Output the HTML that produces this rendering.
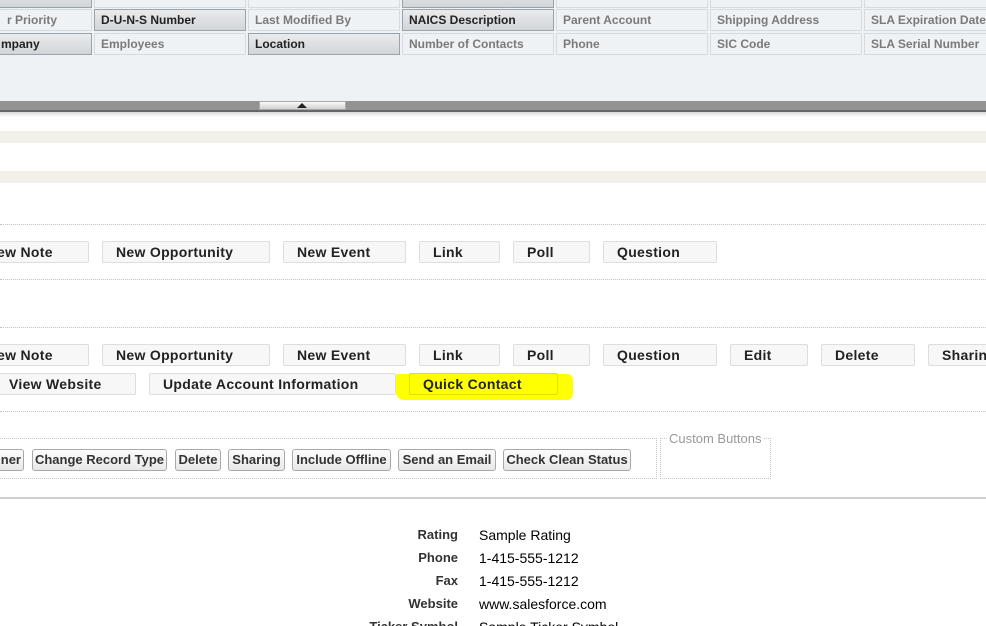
<!DOCTYPE html>
<html><head><meta charset="utf-8"><style>
*{margin:0;padding:0;box-sizing:border-box}
html,body{width:986px;height:626px;overflow:hidden}
body{background:#fff;font-family:"Liberation Sans",Arial,sans-serif;position:relative}
.a{position:absolute}
.panel{left:0;top:0;width:986px;height:101px;background:#eff2f5}
.c{position:absolute;height:22px;width:152px;border:1px solid #d5dbe0;background:#eff2f5;color:#7a7a7a;font-weight:bold;font-size:12px;line-height:20px;padding-left:6px;white-space:nowrap;overflow:hidden}
.c.d{border-color:#9aa2aa;background:linear-gradient(#e9ebed,#d2d5d8);color:#222}
.bar{left:0;top:101px;width:986px;height:11px;background:#939393;border-bottom:2px solid #666}
.sh{left:0;top:112px;width:986px;height:5px;background:linear-gradient(#d8d8d8,#fff)}
.handle{left:259px;top:101px;width:87px;height:9px;background:linear-gradient(#fafafa,#d0d0d0);border:1px solid #aaa}
.beige{left:0;width:986px;height:12px;background:#f1f1e9}
.dot{left:0;width:986px;border-top:1px dotted #c4c4c4;height:0}
.b{position:absolute;height:22px;border:1px solid #dedede;background:#f7f7f7;border-radius:2px;font-weight:bold;font-size:14px;color:#222;line-height:20px;padding-left:13px;letter-spacing:.3px;white-space:nowrap;overflow:hidden}
.k{position:absolute;top:449px;height:22px;border:1px solid #a9a9a9;border-radius:3px;background:linear-gradient(#fdfdfd,#e8e8e8);font-weight:bold;font-size:13px;color:#333;line-height:20px;text-align:center;white-space:nowrap;overflow:hidden}
.l{position:absolute;right:528px;font-weight:bold;font-size:13px;color:#333;text-align:right;white-space:nowrap}
.v{position:absolute;left:479px;font-size:14px;color:#000;white-space:nowrap}
</style></head><body>
<div class="a panel"></div>
<div class="c d" style="left:-60px;top:-14px"></div>
<div class="c" style="left:94px;top:-14px"></div>
<div class="c" style="left:248px;top:-14px"></div>
<div class="c d" style="left:402px;top:-14px"></div>
<div class="c" style="left:556px;top:-14px"></div>
<div class="c" style="left:710px;top:-14px"></div>
<div class="c" style="left:864px;top:-14px"></div>

<div class="c" style="left:-60px;top:9px;padding-left:66px">r Priority</div>
<div class="c d" style="left:94px;top:9px">D-U-N-S Number</div>
<div class="c" style="left:248px;top:9px">Last Modified By</div>
<div class="c d" style="left:402px;top:9px">NAICS Description</div>
<div class="c" style="left:556px;top:9px">Parent Account</div>
<div class="c" style="left:710px;top:9px">Shipping Address</div>
<div class="c" style="left:864px;top:9px">SLA Expiration Date</div>

<div class="c d" style="left:-60px;top:33px;padding-left:60px">mpany</div>
<div class="c" style="left:94px;top:33px">Employees</div>
<div class="c d" style="left:248px;top:33px">Location</div>
<div class="c" style="left:402px;top:33px">Number of Contacts</div>
<div class="c" style="left:556px;top:33px">Phone</div>
<div class="c" style="left:710px;top:33px">SIC Code</div>
<div class="c" style="left:864px;top:33px">SLA Serial Number</div>

<div class="a bar"></div>
<div class="a sh"></div>
<div class="a handle"><div style="position:absolute;left:37px;top:1px;width:0;height:0;border-left:5px solid transparent;border-right:5px solid transparent;border-bottom:5px solid #222"></div></div>

<div class="a beige" style="top:131px"></div>
<div class="a beige" style="top:171px"></div>

<div class="a dot" style="top:224px"></div>
<div class="a dot" style="top:279px"></div>
<div class="a dot" style="top:327px"></div>
<div class="a dot" style="top:411px"></div>

<div class="b" style="left:-40px;top:241px;width:129px;padding-left:36px">ew Note</div>
<div class="b" style="left:102px;top:241px;width:168px">New Opportunity</div>
<div class="b" style="left:283px;top:241px;width:123px">New Event</div>
<div class="b" style="left:419px;top:241px;width:81px">Link</div>
<div class="b" style="left:513px;top:241px;width:77px">Poll</div>
<div class="b" style="left:603px;top:241px;width:114px">Question</div>

<div class="b" style="left:-40px;top:344px;width:129px;padding-left:36px">ew Note</div>
<div class="b" style="left:102px;top:344px;width:168px">New Opportunity</div>
<div class="b" style="left:283px;top:344px;width:123px">New Event</div>
<div class="b" style="left:419px;top:344px;width:81px">Link</div>
<div class="b" style="left:513px;top:344px;width:77px">Poll</div>
<div class="b" style="left:603px;top:344px;width:114px">Question</div>
<div class="b" style="left:730px;top:344px;width:78px">Edit</div>
<div class="b" style="left:821px;top:344px;width:94px">Delete</div>
<div class="b" style="left:928px;top:344px;width:80px">Sharing</div>

<div class="a" style="left:396px;top:374px;width:177px;height:26px;background:#ffff00;border-radius:2px 6px 6px 8px"></div>
<div class="b" style="left:-10px;top:373px;width:146px;padding-left:18px">View Website</div>
<div class="b" style="left:149px;top:373px;width:247px">Update Account Information</div>
<div class="b" style="left:409px;top:373px;width:149px;background:#ffff00;border-color:#e0e000">Quick Contact</div>

<div class="a" style="left:-2px;top:438px;width:659px;height:41px;border:1px dotted #c4c4c4"></div>
<div class="a" style="left:660px;top:438px;width:111px;height:41px;border:1px dotted #c4c4c4"></div>
<div class="a" style="left:667px;top:431px;background:#fff;padding:0 2px;font-size:13px;color:#999">Custom Buttons</div>

<div class="k" style="left:-20px;width:44px;text-align:right;padding-right:2px">ner</div>
<div class="k" style="left:32px;width:135px">Change Record Type</div>
<div class="k" style="left:175px;width:46px">Delete</div>
<div class="k" style="left:228px;width:57px">Sharing</div>
<div class="k" style="left:292px;width:99px">Include Offline</div>
<div class="k" style="left:398px;width:98px">Send an Email</div>
<div class="k" style="left:503px;width:128px">Check Clean Status</div>

<div class="a" style="left:0;top:497px;width:986px;height:2px;background:#cfcfcf"></div>

<div class="l" style="top:527px">Rating</div><div class="v" style="top:527px">Sample Rating</div>
<div class="l" style="top:550px">Phone</div><div class="v" style="top:550px">1-415-555-1212</div>
<div class="l" style="top:573px">Fax</div><div class="v" style="top:573px">1-415-555-1212</div>
<div class="l" style="top:596px">Website</div><div class="v" style="top:596px">www.salesforce.com</div>
<div class="l" style="top:619px">Ticker Symbol</div><div class="v" style="top:619px">Sample Ticker Symbol</div>
</body></html>
